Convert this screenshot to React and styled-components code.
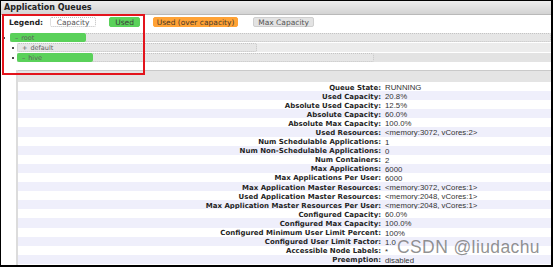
import React from 'react';
import styled, { createGlobalStyle } from 'styled-components';

const GlobalStyle = createGlobalStyle`
  html, body {
    margin: 0;
    padding: 0;
    background: #fff;
  }
  body {
    font-family: "DejaVu Sans", Verdana, sans-serif;
  }
`;

const Frame = styled.div`
  position: relative;
  width: 553px;
  height: 267px;
  box-sizing: border-box;
  border-style: solid;
  border-color: #000;
  border-width: 1px 2px 2px 1px;
  overflow: hidden;
  background: #fff;
  display: flex;
  flex-direction: column;
`;

const TitleBar = styled.div`
  flex: none;
  height: 13px;
  padding-left: 3px;
  display: flex;
  align-items: center;
  background: linear-gradient(#ededed, #d3d3d3);
  border-bottom: 1px solid #b9b9b9;
  font-weight: bold;
  font-size: 8px;
  color: #222;
`;

const Legend = styled.div`
  flex: none;
  height: 14px;
  padding-left: 8px;
  display: flex;
  align-items: center;
  font-size: 7.5px;
`;

const LegendTitle = styled.span`
  font-weight: bold;
  color: #222;
`;

const LegendBox = styled.span`
  box-sizing: border-box;
  width: ${({ $w }) => $w}px;
  margin-left: ${({ $gap }) => $gap}px;
  height: 10px;
  display: flex;
  align-items: center;
  justify-content: center;
  border-radius: 2px;
  color: ${({ $fg }) => $fg || '#555'};
  background: ${({ $bg }) => $bg};
  border: 1px ${({ $dotted }) => ($dotted ? 'dotted' : 'solid')} ${({ $line }) => $line};
`;

const Tree = styled.div`
  flex: none;
  margin-top: 4px;
  display: flex;
  flex-direction: column;
  gap: 1px;
`;

const TreeRow = styled.div`
  height: 9px;
  display: flex;
  align-items: center;
  padding-left: ${({ $indent }) => $indent}px;
`;

const Dot = styled.span`
  width: 2px;
  height: 2px;
  border-radius: 50%;
  background: #111;
  margin-right: ${({ $space }) => $space}px;
  flex: none;
`;

const Band = styled.div`
  flex: 1;
  height: 100%;
  background: ${({ $shade }) => $shade};
`;

const MaxBox = styled.div`
  position: relative;
  box-sizing: border-box;
  height: 100%;
  border: 1px dotted #c4c4c4;
  border-radius: 2px;
  background: #e6e6e6;
`;

const UsedBar = styled.div`
  border-radius: 2px;
  background: #5ad15a;
  margin: -1px 0 0 -1px;
  height: calc(100% + 2px);
`;

const QueueLabel = styled.span`
  position: absolute;
  left: 4px;
  top: 0;
  bottom: 0;
  display: flex;
  align-items: center;
  gap: 3px;
  font-size: 6.5px;
  color: #5e5e5e;
  white-space: nowrap;
`;

const Details = styled.div`
  flex: 1;
  margin: 8px 0 0 15px;
  border-left: 2px solid #dcdcdc;
  display: flex;
  flex-direction: column;
`;

const DetailsHead = styled.div`
  flex: none;
  height: 11px;
  border-top: 1px solid #c9c9c9;
  background: #e4e4e4;
`;

const InfoRow = styled.div`
  flex: none;
  box-sizing: border-box;
  height: 9.1px;
  padding-top: 1px;
  display: grid;
  grid-template-columns: 363px 1fr;
  column-gap: 4px;
  align-items: center;
  background: ${({ $striped }) => ($striped ? '#efeffb' : '#fff')};
`;

const InfoLabel = styled.span`
  text-align: right;
  font-weight: bold;
  font-size: 7px;
  color: #1f1f1f;
  white-space: nowrap;
`;

const InfoValue = styled.span`
  font-family: "Liberation Sans", Arial, sans-serif;
  font-size: 7.8px;
  color: #333;
  white-space: nowrap;
`;

const Annotation = styled.div`
  position: absolute;
  left: 1px;
  top: 13px;
  width: 143px;
  height: 61px;
  box-sizing: border-box;
  border: 2px solid #e3141c;
  pointer-events: none;
`;

const Watermark = styled.div`
  position: absolute;
  right: 11px;
  bottom: 7px;
  font-family: "Liberation Sans", Arial, sans-serif;
  font-size: 17.5px;
  letter-spacing: 0.4px;
  color: rgba(110, 110, 110, 0.75);
  white-space: nowrap;
`;

const queues = [
  { name: 'root', sign: '–', indent: 2, space: 5, shade: '#e3e3e3', max: '100%', used: 76 },
  { name: 'default', sign: '+', indent: 11, space: 3, shade: '#ececec', max: '240px', used: 0 },
  { name: 'hive', sign: '–', indent: 11, space: 3, shade: '#e3e3e3', max: '357px', used: 76 },
];

const info = [
  ['Queue State:', 'RUNNING'],
  ['Used Capacity:', '20.8%'],
  ['Absolute Used Capacity:', '12.5%'],
  ['Absolute Capacity:', '60.0%'],
  ['Absolute Max Capacity:', '100.0%'],
  ['Used Resources:', '<memory:3072, vCores:2>'],
  ['Num Schedulable Applications:', '1'],
  ['Num Non-Schedulable Applications:', '0'],
  ['Num Containers:', '2'],
  ['Max Applications:', '6000'],
  ['Max Applications Per User:', '6000'],
  ['Max Application Master Resources:', '<memory:3072, vCores:1>'],
  ['Used Application Master Resources:', '<memory:2048, vCores:1>'],
  ['Max Application Master Resources Per User:', '<memory:2048, vCores:1>'],
  ['Configured Capacity:', '60.0%'],
  ['Configured Max Capacity:', '100.0%'],
  ['Configured Minimum User Limit Percent:', '100%'],
  ['Configured User Limit Factor:', '1.0'],
  ['Accessible Node Labels:', '*'],
  ['Preemption:', 'disabled'],
];

const App = () => (
  <Frame>
    <GlobalStyle />
    <TitleBar>Application Queues</TitleBar>
    <Legend>
      <LegendTitle>Legend:</LegendTitle>
      <LegendBox $w={46} $gap={7} $bg="#fff" $line="#bdbdbd" $dotted>Capacity</LegendBox>
      <LegendBox $w={31} $gap={13} $bg="#5ad15a" $line="#5ad15a" $fg="#3c3c3c">Used</LegendBox>
      <LegendBox $w={85} $gap={13} $bg="#ffa235" $line="#ffa235" $fg="#4a3a2a">Used (over capacity)</LegendBox>
      <LegendBox $w={61} $gap={15} $bg="#e3e3e3" $line="#cfcfcf">Max Capacity</LegendBox>
    </Legend>
    <Tree>
      {queues.map((q) => (
        <TreeRow key={q.name} $indent={q.indent}>
          <Dot $space={q.space} />
          <Band $shade={q.shade}>
            <MaxBox style={{ width: q.max }}>
              {q.used > 0 && <UsedBar style={{ width: q.used }} />}
              <QueueLabel>
                <span>{q.sign}</span>
                <span>{q.name}</span>
              </QueueLabel>
            </MaxBox>
          </Band>
        </TreeRow>
      ))}
    </Tree>
    <Details>
      <DetailsHead />
      {info.map(([label, value], i) => (
        <InfoRow key={label} $striped={i % 2 === 1}>
          <InfoLabel>{label}</InfoLabel>
          <InfoValue>{value}</InfoValue>
        </InfoRow>
      ))}
    </Details>
    <Annotation />
    <Watermark>CSDN @liudachu</Watermark>
  </Frame>
);

export default App;
